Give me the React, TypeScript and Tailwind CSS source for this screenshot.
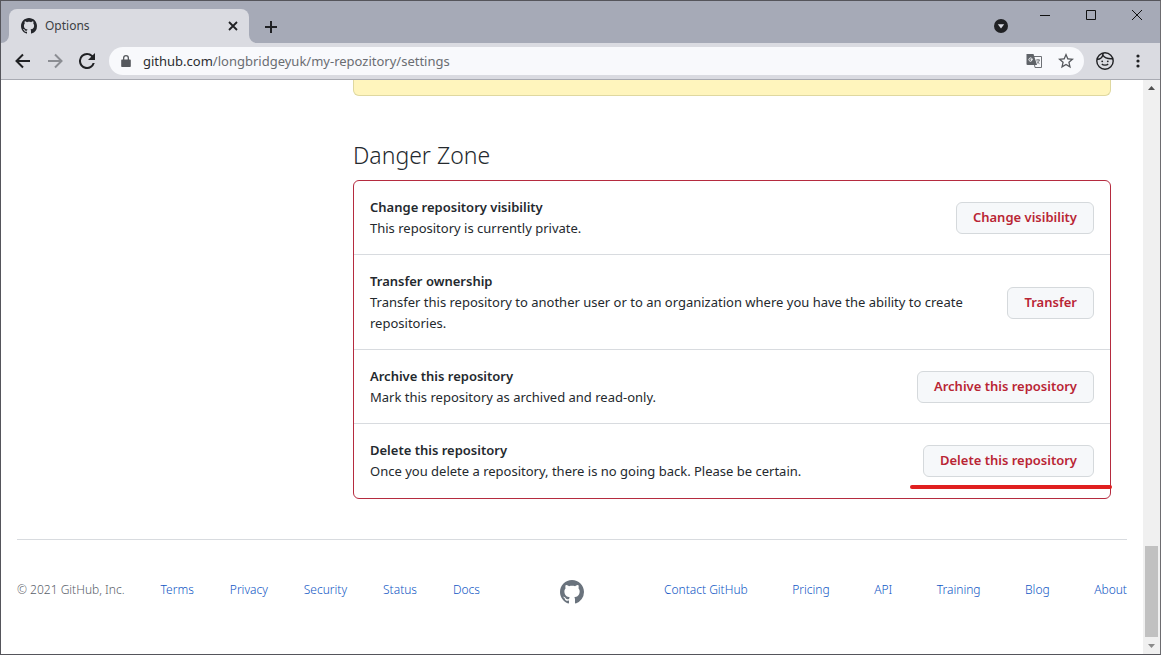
import { useState } from "react";

type DangerAction = {
  title: string;
  description: string;
  button: string;
  marked?: boolean;
};

const actions: DangerAction[] = [
  {
    title: "Change repository visibility",
    description: "This repository is currently private.",
    button: "Change visibility",
  },
  {
    title: "Transfer ownership",
    description:
      "Transfer this repository to another user or to an organization where you have the ability to create repositories.",
    button: "Transfer",
  },
  {
    title: "Archive this repository",
    description: "Mark this repository as archived and read-only.",
    button: "Archive this repository",
  },
  {
    title: "Delete this repository",
    description: "Once you delete a repository, there is no going back. Please be certain.",
    button: "Delete this repository",
    marked: true,
  },
];

const leftLinks = ["Terms", "Privacy", "Security", "Status", "Docs"];
const rightLinks = ["Contact GitHub", "Pricing", "API", "Training", "Blog", "About"];

function GitHubMark({ className }: { className?: string }) {
  return (
    <svg className={className} viewBox="0 0 16 16" fill="currentColor" aria-hidden="true">
      <path
        fillRule="evenodd"
        d="M8 0C3.58 0 0 3.58 0 8c0 3.54 2.29 6.53 5.47 7.59.4.07.55-.17.55-.38 0-.19-.01-.82-.01-1.49-2.01.37-2.53-.49-2.69-.94-.09-.23-.48-.94-.82-1.13-.28-.15-.68-.52-.01-.53.63-.01 1.08.58 1.23.82.72 1.21 1.87.87 2.33.66.07-.52.28-.87.51-1.07-1.78-.2-3.64-.89-3.64-3.95 0-.87.31-1.59.82-2.15-.08-.2-.36-1.02.08-2.12 0 0 .67-.21 2.2.82.64-.18 1.32-.27 2-.27.68 0 1.36.09 2 .27 1.53-1.04 2.2-.82 2.2-.82.44 1.1.16 1.92.08 2.12.51.56.82 1.27.82 2.15 0 3.07-1.87 3.75-3.65 3.95.29.25.54.73.54 1.48 0 1.07-.01 1.93-.01 2.2 0 .21.15.46.55.38A8.013 8.013 0 0016 8c0-4.42-3.58-8-8-8z"
      />
    </svg>
  );
}

function TabStrip() {
  return (
    <div className="flex h-[42px] items-end bg-[#a6aab7] pl-2">
      <div className="relative flex h-[34px] w-60 items-center rounded-t-lg bg-[#dadbe1] pr-2 pl-3">
        <svg className="absolute bottom-0 -left-2 size-2 text-[#dadbe1]" viewBox="0 0 8 8" fill="currentColor">
          <path d="M8 0v8H0a8 8 0 0 0 8-8z" />
        </svg>
        <svg className="absolute -right-2 bottom-0 size-2 text-[#dadbe1]" viewBox="0 0 8 8" fill="currentColor">
          <path d="M0 0v8h8a8 8 0 0 1-8-8z" />
        </svg>
        <GitHubMark className="size-4 text-[#24262b]" />
        <span className="ml-2 flex-1 text-xs text-[#3c4043]">Options</span>
        <button type="button" aria-label="Close tab" className="p-0.5 text-[#202124]">
          <svg className="size-3" viewBox="0 0 12 12" fill="none" stroke="currentColor" strokeWidth={1.8}>
            <path d="M2 2l8 8M10 2l-8 8" />
          </svg>
        </button>
      </div>
      <button type="button" aria-label="New tab" className="mb-2.5 ml-4 text-[#202124]">
        <svg className="size-3" viewBox="0 0 12 12" fill="none" stroke="currentColor" strokeWidth={2}>
          <path d="M6 0v12M0 6h12" />
        </svg>
      </button>
      <div className="flex-1" />
      <button type="button" aria-label="Search tabs" className="mb-2.5">
        <svg className="size-3.5" viewBox="0 0 14 14">
          <circle cx="7" cy="7" r="7" fill="#202124" />
          <path d="M3.8 5.3h6.4L7 9.4z" fill="#d7d9e0" />
        </svg>
      </button>
      <div className="ml-2 flex self-start text-[#111]">
        <button type="button" aria-label="Minimize" className="flex h-7 w-[46px] items-center justify-center pl-3">
          <svg className="size-2.5" viewBox="0 0 10 10" fill="none" stroke="currentColor">
            <path d="M0 5.5h10" />
          </svg>
        </button>
        <button type="button" aria-label="Maximize" className="flex h-7 w-[46px] items-center justify-center pl-3">
          <svg className="size-2.5" viewBox="0 0 10 10" fill="none" stroke="currentColor">
            <path d="M.5.5h9v9h-9z" />
          </svg>
        </button>
        <button type="button" aria-label="Close" className="flex h-7 w-[52px] items-center justify-center pl-1.5">
          <svg className="size-2.5" viewBox="0 0 10 10" fill="none" stroke="currentColor">
            <path d="M0 0l10 10M10 0L0 10" />
          </svg>
        </button>
      </div>
    </div>
  );
}

function Toolbar() {
  const [path, setPath] = useState("/longbridgeyuk/my-repozitory/settings");

  return (
    <div className="flex h-[37px] items-center border-b border-[#a9abb3] bg-[#dadbe1] pr-3.5 pl-3.5">
      <div className="flex gap-4 text-[#202124]">
        <button type="button" aria-label="Back">
          <svg className="size-4" viewBox="0 0 16 16" fill="none" stroke="currentColor" strokeWidth={2}>
            <path d="M15 8H2M8 1.5L1.5 8 8 14.5" />
          </svg>
        </button>
        <button type="button" aria-label="Forward" className="text-[#8b8d93]">
          <svg className="size-4" viewBox="0 0 16 16" fill="none" stroke="currentColor" strokeWidth={2}>
            <path d="M1 8h13M8 1.5L14.5 8 8 14.5" />
          </svg>
        </button>
        <button type="button" aria-label="Reload">
          <svg className="size-4" viewBox="4 4 16 16" fill="currentColor">
            <path d="M17.65 6.35A7.958 7.958 0 0 0 12 4a8 8 0 1 0 7.73 10h-2.08A6 6 0 1 1 12 6c1.66 0 3.14.69 4.22 1.78L13 11h7V4z" />
          </svg>
        </button>
      </div>
      <div className="ml-3.5 flex h-7 flex-1 items-center rounded-full bg-[#f8f9fc] pr-2.5 pl-3">
        <svg className="h-3 w-2.5 text-[#55585d]" viewBox="0 0 10 12" fill="currentColor">
          <path d="M1.2 4.5H2V3a3 3 0 0 1 6 0v1.5h.8c.6 0 1 .4 1 1V11c0 .6-.4 1-1 1H1.2c-.6 0-1-.4-1-1V5.5c0-.6.4-1 1-1zM3.3 4.5h3.4V3a1.7 1.7 0 0 0-3.4 0z" />
        </svg>
        <label className="ml-3 flex flex-1 items-center leading-5">
          <span className="text-[#2b2d31]">github.com</span>
          <input
            type="text"
            value={path}
            onChange={(e) => setPath(e.target.value)}
            className="flex-1 bg-transparent text-[#6a6d72] outline-none"
          />
        </label>
        <button type="button" aria-label="Translate this page">
          <svg className="size-4" viewBox="0 0 16 16">
            <path d="M7 3.5h8.500v11H9z" fill="#f8f9fc" stroke="#6d7075" />
            <path d="M1 1h6.500l3.500 11H1.500A1 1 0 0 1 .5 11V1.500z" fill="#5f6368" />
            <path d="M7 6.200H5v1h.9C5.700 8 5.200 8.300 4.700 8.300a1.700 1.700 0 1 1 1-3" fill="none" stroke="#f8f9fc" />
            <path d="M10 7h4M12 6v1M13.300 7c-.3 1.700-1.300 2.800-2.500 3.600M11 8.300c.5 1 1.500 1.900 2.500 2.400" fill="none" stroke="#6d7075" strokeWidth={0.9} />
          </svg>
        </button>
        <button type="button" aria-label="Bookmark this tab" className="ml-4">
          <svg className="size-4 text-[#55585d]" viewBox="2 2 20 20" fill="currentColor">
            <path d="M22 9.240l-7.190-.62L12 2 9.190 8.630 2 9.240l5.460 4.730L5.820 21 12 17.270 18.180 21l-1.630-7.030L22 9.240zM12 15.400l-3.760 2.270 1-4.280-3.320-2.880 4.380-.38L12 6.100l1.710 4.040 4.380.38-3.320 2.880 1 4.280L12 15.400z" />
          </svg>
        </button>
      </div>
      <button type="button" aria-label="Profile" className="ml-3 text-[#202124]">
        <svg className="size-[18px]" viewBox="0 0 18 18" fill="none" stroke="currentColor" strokeWidth={1.4}>
          <circle cx="9" cy="9" r="8.200" />
          <path d="M1 7.200C3.500 7.400 5.800 6 6.800 3.200c1.700 2.600 5.200 3.900 10 3.500" />
          <path d="M6.800 3.200C6.700 2.300 7 1.500 7.500 1" />
          <path d="M5.800 12c1.300 1.600 5.100 1.600 6.400 0" strokeWidth={1.2} />
          <circle cx="6.200" cy="9.300" r=".9" fill="currentColor" stroke="none" />
          <circle cx="11.800" cy="9.300" r=".9" fill="currentColor" stroke="none" />
        </svg>
      </button>
      <button type="button" aria-label="Menu" className="ml-4 px-1.5 text-[#202124]">
        <svg className="h-3.5 w-1" viewBox="0 0 4 14" fill="currentColor">
          <circle cx="2" cy="2" r="1.600" />
          <circle cx="2" cy="7" r="1.600" />
          <circle cx="2" cy="12" r="1.600" />
        </svg>
      </button>
    </div>
  );
}

function DangerRow({ action }: { action: DangerAction }) {
  return (
    <li className="relative flex items-center justify-between border-b border-[#d8dbdf] px-4 pt-4 pb-[15px] last:border-b-0 last:pb-4">
      <div className="max-w-[612px] leading-[21px]">
        <strong className="block font-semibold">{action.title}</strong>
        <p>{action.description}</p>
      </div>
      <button
        type="button"
        className="h-8 shrink-0 rounded-md border border-[#d5d9dc] bg-[#f6f8fa] px-4 font-semibold text-[#b92534]"
      >
        {action.button}
      </button>
      {action.marked && <span className="absolute -right-0.5 bottom-[9px] h-1 w-[202px] rounded-full bg-[#e0201f]" />}
    </li>
  );
}

function Footer() {
  return (
    <footer className="mx-4 mt-10 flex items-center border-t border-[#d8dbdf] pt-9 text-xs leading-[18px]">
      <ul className="flex flex-1 justify-between text-[#586069]">
        <li className="font-light">© 2021 GitHub, Inc.</li>
        {leftLinks.map((link) => (
          <li key={link}>
            <a href="#" className="font-light text-[#0f56c4]">{link}</a>
          </li>
        ))}
      </ul>
      <a href="#" aria-label="GitHub" className="mx-20 mt-1 text-[#6a737d]">
        <GitHubMark className="size-6" />
      </a>
      <ul className="flex flex-1 justify-between">
        {rightLinks.map((link) => (
          <li key={link}>
            <a href="#" className="font-light text-[#0f56c4]">{link}</a>
          </li>
        ))}
      </ul>
    </footer>
  );
}

function Scrollbar() {
  return (
    <div className="flex w-[17px] flex-col items-center bg-[#f0f0f0] py-1.5 text-[#505050]">
      <svg className="h-1 w-[7px]" viewBox="0 0 7 4" fill="currentColor">
        <path d="M0 4l3.500-4L7 4z" />
      </svg>
      <div className="flex-1" />
      <div className="mb-[7px] h-[91px] w-[13px] bg-[#c1c1c1]" />
      <svg className="h-1 w-[7px] text-[#8a8a8a]" viewBox="0 0 7 4" fill="currentColor">
        <path d="M0 0h7L3.500 4z" />
      </svg>
    </div>
  );
}

export default function App() {
  return (
    <div className="relative flex h-screen flex-col overflow-hidden border border-[#55555b] border-r-[#6d6c70] bg-white font-['Noto_Sans','Open_Sans',sans-serif] text-[13px] text-[#24292e]">
      <TabStrip />
      <Toolbar />
      <div className="flex min-h-0 flex-1">
        <div className="min-w-0 flex-1">
          <main className="mr-8 ml-[352px]">
            <div className="h-4 rounded-b-md border border-t-0 border-[#dfd8a0] bg-[#fff5bd]" />
            <h2 className="mt-[42px] mb-2 text-[23px] leading-[34px] font-light">Danger Zone</h2>
            <ul className="rounded-md border border-[#b52b3f]">
              {actions.map((action) => (
                <DangerRow key={action.title} action={action} />
              ))}
            </ul>
          </main>
          <Footer />
        </div>
        <Scrollbar />
      </div>
      {/* Desktop showing through the window frame */}
      <div className="absolute top-8 -right-px h-[90px] w-px bg-[#35333a]" />
      <div className="absolute top-[121px] -right-px h-[54px] w-px bg-[#9c1f2c]" />
      <div className="absolute top-[245px] -right-px h-8 w-px bg-[#a07a1c]" />
      <div className="absolute right-[163px] -bottom-px h-px w-[363px] bg-[#6b1a20]" />
    </div>
  );
}
